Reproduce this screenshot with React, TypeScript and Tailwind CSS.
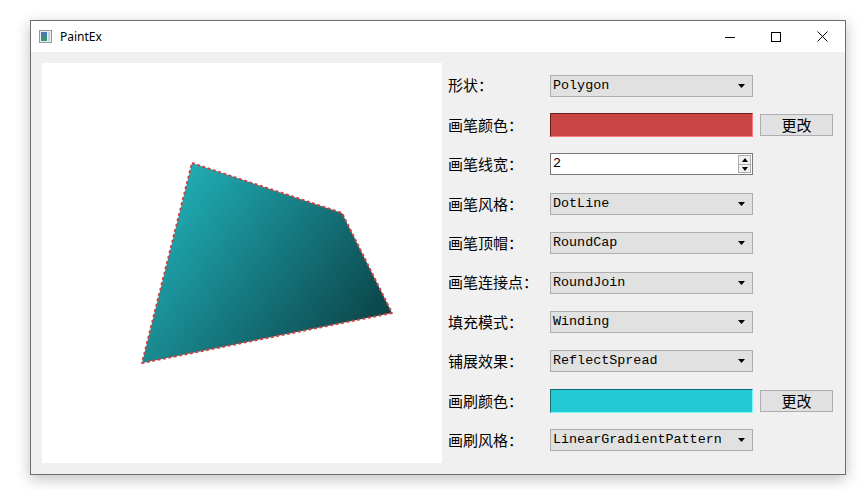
import React from "react";

const cjk = { fontFamily: '"Noto Sans CJK SC", "Noto Sans", sans-serif' };
const mono = { fontFamily: '"Liberation Mono", "DejaVu Sans Mono", monospace' };

function Combo({ value }: { value: string }) {
  return (
    <div className="relative flex h-[22px] w-[203px] items-center border border-[#adadad] bg-[#e1e1e1] pl-[2px] text-[13.4px] text-black" style={mono}>
      {value}
      <svg className="absolute right-[6px] top-[8px]" width="8" height="5" viewBox="0 0 8 5">
        <path d="M0 0H7L3.5 4Z" fill="#000" />
      </svg>
    </div>
  );
}

function ColorBox({ color, dark, light }: { color: string; dark: string; light: string }) {
  return (
    <div
      className="h-[24px] w-[203px] border"
      style={{ backgroundColor: color, borderTopColor: dark, borderLeftColor: dark, borderRightColor: light, borderBottomColor: light }}
    />
  );
}

function ChangeButton() {
  return (
    <button className="ml-[7px] flex h-[22px] w-[73px] items-center justify-center border border-[#adadad] bg-[#e1e1e1] text-[15px] text-black" style={cjk}>
      更改
    </button>
  );
}

function SpinBox() {
  return (
    <div className="flex h-[22px] w-[203px] items-center border border-[#7a7a7a] bg-white text-[13.4px] text-black" style={mono}>
      <span className="flex-1 pl-[2px]">2</span>
      <div className="mr-[1px] flex h-[18px] w-[13px] flex-col">
        <div className="flex flex-1 items-center justify-center border border-[#adadad] bg-[#f0f0f0]">
          <svg width="6" height="4" viewBox="0 0 6 4"><path d="M3 0L6 4H0Z" fill="#000" /></svg>
        </div>
        <div className="flex flex-1 items-center justify-center border border-t-0 border-[#adadad] bg-[#f0f0f0]">
          <svg width="6" height="4" viewBox="0 0 6 4"><path d="M0 0H6L3 4Z" fill="#000" /></svg>
        </div>
      </div>
    </div>
  );
}

function Row({ label, children }: { label: string; children: React.ReactNode }) {
  return (
    <div className="flex h-[39.4px] items-center">
      <span className="w-[102px] text-[15px] text-black" style={cjk}>
        {label}
      </span>
      {children}
    </div>
  );
}

function Canvas() {
  return (
    <div className="h-[400px] w-[400px] shrink-0 bg-white">
      <svg width="400" height="400" viewBox="0 0 400 400">
        <defs>
          <linearGradient id="brush" gradientUnits="userSpaceOnUse" x1="120" y1="100" x2="370" y2="290">
            <stop offset="0" stopColor="#22b6be" />
            <stop offset="1" stopColor="#073236" />
          </linearGradient>
        </defs>
        <polygon
          points="150,100 300,150 350,250 100,300"
          fill="url(#brush)"
          stroke="#c94545"
          strokeWidth="2"
          strokeDasharray="3 2.5"
          strokeLinejoin="round"
        />
      </svg>
    </div>
  );
}

export default function App() {
  return (
    <div className="h-[490px] w-[860px] bg-white pl-[30px] pt-[20px]">
      <div className="flex h-[455px] w-[816px] flex-col border border-[#6e6e6e] shadow-[0_4px_14px_rgba(0,0,0,0.25)]">
        {/* title bar */}
        <div className="flex h-[31px] items-center bg-white">
          <svg className="ml-[8px]" width="13" height="13" viewBox="0 0 13 13">
            <rect x="0.5" y="0.5" width="12" height="12" fill="#e8eef2" stroke="#8a9aa6" />
            <rect x="2" y="2" width="6" height="9" fill="#3d8f7a" />
            <rect x="2" y="2" width="6" height="4" fill="#4a78b0" />
            <rect x="9" y="2" width="2" height="9" fill="#c8d4dc" />
          </svg>
          <span className="ml-[8px] text-[12px] text-black" style={{ fontFamily: '"Noto Sans", "Liberation Sans", sans-serif' }}>
            PaintEx
          </span>
          <div className="ml-auto flex h-full">
            <div className="flex w-[46px] items-center justify-center">
              <svg width="10" height="10" viewBox="0 0 10 10"><path d="M0 5.5H10" stroke="#000" strokeWidth="1" /></svg>
            </div>
            <div className="flex w-[46px] items-center justify-center">
              <svg width="10" height="10" viewBox="0 0 10 10"><rect x="0.5" y="0.5" width="9" height="9" fill="none" stroke="#000" /></svg>
            </div>
            <div className="flex w-[46px] items-center justify-center">
              <svg width="11" height="11" viewBox="0 0 11 11"><path d="M0.5 0.5L10.5 10.5M10.5 0.5L0.5 10.5" stroke="#000" strokeWidth="1" /></svg>
            </div>
          </div>
        </div>

        {/* client area */}
        <div className="flex flex-1 bg-[#f0f0f0] pl-[11px] pt-[11px]">
          <Canvas />
          <div className="ml-[6px] flex flex-col pt-[3px]">
            <Row label="形状：">
              <Combo value="Polygon" />
            </Row>
            <Row label="画笔颜色：">
              <ColorBox color="#c84546" dark="#6b1e1e" light="#ff7a7a" />
              <ChangeButton />
            </Row>
            <Row label="画笔线宽：">
              <SpinBox />
            </Row>
            <Row label="画笔风格：">
              <Combo value="DotLine" />
            </Row>
            <Row label="画笔顶帽：">
              <Combo value="RoundCap" />
            </Row>
            <Row label="画笔连接点：">
              <Combo value="RoundJoin" />
            </Row>
            <Row label="填充模式：">
              <Combo value="Winding" />
            </Row>
            <Row label="铺展效果：">
              <Combo value="ReflectSpread" />
            </Row>
            <Row label="画刷颜色：">
              <ColorBox color="#22cad3" dark="#186a70" light="#7ff8ff" />
              <ChangeButton />
            </Row>
            <Row label="画刷风格：">
              <Combo value="LinearGradientPattern" />
            </Row>
          </div>
        </div>
      </div>
    </div>
  );
}
